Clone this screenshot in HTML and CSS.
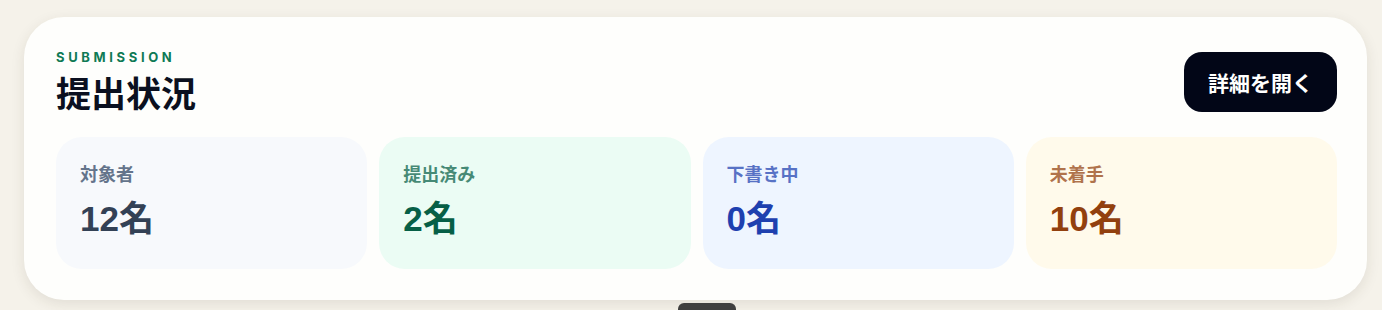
FILE: index.html
```html
<!DOCTYPE html>
<html lang="ja">
<head>
    <meta charset="UTF-8">
    <meta name="viewport" content="width=device-width, initial-scale=1.0">
    <title>提出状況</title>
    <link rel="stylesheet" href="styles.css">
</head>
<body>
    <!-- Submission summary -->
    <section class="panel">
        <div class="panel-header">
            <div class="panel-heading">
                <p class="eyebrow">SUBMISSION</p>
                <h2 class="panel-title">提出状況</h2>
            </div>
            <button class="detail-btn">詳細を開く</button>
        </div>

        <div class="stats">
            <div class="stat stat-total">
                <span class="stat-label">対象者</span>
                <span class="stat-value">12名</span>
            </div>
            <div class="stat stat-done">
                <span class="stat-label">提出済み</span>
                <span class="stat-value">2名</span>
            </div>
            <div class="stat stat-draft">
                <span class="stat-label">下書き中</span>
                <span class="stat-value">0名</span>
            </div>
            <div class="stat stat-todo">
                <span class="stat-label">未着手</span>
                <span class="stat-value">10名</span>
            </div>
        </div>
    </section>

    <div class="handle"></div>
</body>
</html>
```

FILE: styles.css
```css
body {
    margin: 0;
    padding: 17px 15px 0 24px;
    background: #f5f2ea;
    font-family: "Liberation Sans", "Noto Sans CJK JP", sans-serif;
    overflow: hidden;
}

.panel {
    background: #fefefc;
    border-radius: 40px;
    padding: 32px 30px 31px 32px;
    box-shadow: 0 4px 14px rgba(60, 50, 30, 0.10);
}

.panel-header {
    display: flex;
    justify-content: space-between;
    align-items: center;
    margin-bottom: 23px;
}

.eyebrow {
    margin: 0 0 5px;
    font-family: Inter, "Liberation Sans", sans-serif;
    font-size: 13px;
    line-height: 16px;
    font-weight: 700;
    letter-spacing: 0.28em;
    color: #0f7a55;
}

.panel-title {
    margin: 0;
    font-family: "Noto Sans CJK JP", sans-serif;
    font-size: 35px;
    line-height: 44px;
    font-weight: 700;
    color: #0b1020;
}

.detail-btn {
    height: 60px;
    padding: 0 24px;
    border: none;
    border-radius: 18px;
    background: #020617;
    color: #fff;
    font-family: "Noto Sans CJK JP", sans-serif;
    font-size: 21px;
    font-weight: 700;
    cursor: pointer;
}

.stats {
    display: grid;
    grid-template-columns: repeat(4, 1fr);
    gap: 12px;
}

.stat {
    height: 132px;
    box-sizing: border-box;
    padding: 24px 24px;
    border-radius: 26px;
    display: flex;
    flex-direction: column;
}

.stat-label {
    font-family: "Noto Sans CJK JP", sans-serif;
    font-size: 18px;
    line-height: 24px;
    font-weight: 700;
    opacity: 0.72;
}

.stat-value {
    margin-top: 12px;
    font-size: 35px;
    line-height: 44px;
    font-weight: 700;
}

.stat-total { background: #f7f9fc; color: #334155; }
.stat-done { background: #ebfcf4; color: #065f46; }
.stat-draft { background: #eef5ff; color: #1e40af; }
.stat-todo { background: #fffaeb; color: #92400e; }

.stat-total .stat-label { color: #64748b; opacity: 1; }

.handle {
    width: 58px;
    height: 12px;
    margin: 3px 0 0 654px;
    border-radius: 6px 6px 0 0;
    background: #3f3f3f;
}
```
